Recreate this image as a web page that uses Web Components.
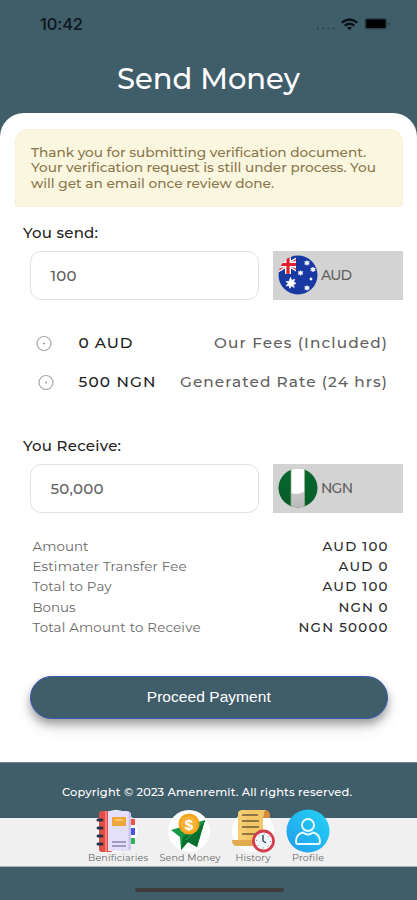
<!DOCTYPE html>
<html lang="en"><head><meta charset="utf-8"><title>Send Money</title>
<style>html,body{margin:0;background:#405d6a}body{font-family:Montserrat,Inter,"Open Sans",sans-serif}</style></head>
<body><send-money-app></send-money-app>
<script>
const define=(name,html,ready)=>{
  const t=document.createElement('template');t.innerHTML=html;
  customElements.define(name,class extends HTMLElement{
    constructor(){super();this.attachShadow({mode:'open'}).append(t.content.cloneNode(true));}
    connectedCallback(){if(ready)ready.call(this);}
  });
};

/* A single line of text tracked out to the width given in "w". */
define('tracked-text',`<style>:host{display:block;white-space:nowrap;flex:none}span{display:inline-block}</style><span><slot></slot></span>`,function(){
  const w=+this.getAttribute('w'),n=this.textContent.length;
  this.style.width=w+'px';
  const s=this.shadowRoot.querySelector('span');
  s.style.letterSpacing=(w-s.getBoundingClientRect().width)/(n-1)+'px';
});

define('status-bar',`<style>:host{display:flex;height:48px;align-items:center;padding:0 26px 0 40px;box-sizing:border-box;color:#0b171d;font-family:Inter,sans-serif;font-size:16.500px;font-weight:500}
svg{margin-left:auto}</style><tracked-text w="43">10:42</tracked-text>
<svg width="76" height="20" viewBox="0 0 76 20"><g fill="#253f4b"><circle cx="3" cy="14.5" r=".9"/><circle cx="8.500" cy="14.500" r=".9"/><circle cx="13.500" cy="14.500" r=".9"/><circle cx="18.500" cy="14.500" r=".9"/></g>
<g fill="none" stroke="#081116" stroke-width="2.300"><path d="M26.700 8.700Q34.500 2.200 42.300 8.700"/><path d="M29.700 11.700Q34.500 7.800 39.300 11.700"/></g><path d="M32 13.600q2.500-1.900 5 0L34.500 16.200z" fill="#081116"/>
<rect x="49.500" y="4" width="22.500" height="11.500" rx="2.500" fill="#2b424d"/><rect x="51" y="5.500" width="19.500" height="8.500" rx="1" fill="#000"/><path d="M73.500 7.500q2.500 2 0 4.500z" fill="#20343d"/></svg>`);

define('page-title',`<style>:host{display:flex;height:60px;justify-content:center;align-items:center;color:#fff;font-size:29px;font-weight:500;margin-bottom:5px}</style><slot></slot>`);

define('notice-box',`<style>:host{display:block;box-sizing:border-box;height:78px;margin:0 14px 0 15px;padding:15.500px 15px 0 16px;background:#fbf6e0;border-radius:14px 14px 4px 4px;box-shadow:inset 0 0 0 1px #f9f1d5;color:#8a764c;font-size:13.700px;font-weight:500;line-height:15.600px}</style><slot></slot>`);

define('field-label',`<style>:host{display:flex;box-sizing:border-box;height:37px;align-items:center;padding-left:23px;color:#222;font-size:15px;font-weight:500}</style><slot></slot>`);

define('amount-field',`<style>:host{display:flex;gap:14.500px;padding:0 14px 0 29.500px;height:48.500px;font-size:15px;font-weight:500;color:#606060}
.in{box-sizing:border-box;width:229px;border:1px solid #e0e0e0;border-radius:11px;display:flex;align-items:center;padding-left:20px;background:#fff}
.cur{flex:1;background:#d3d3d3;display:flex;align-items:center;padding-left:4.500px;gap:3.500px;font-size:14px}</style>
<div class="in"><slot name="value"></slot></div><div class="cur"><slot name="flag"></slot><slot></slot></div>`);

define('flag-icon',`<style>:host{display:block;width:40px;height:40px}svg{display:none}:host([country=au]) .au,:host([country=ng]) .ng{display:block}</style>
<svg class="au" width="40" height="40" viewBox="0 0 40 40"><defs><clipPath id="c"><circle cx="20" cy="20" r="19.500"/></clipPath><clipPath id="u"><path d="M0 0h18v19H0z"/></clipPath></defs>
<g clip-path="url(#c)"><path fill="#1838a2" d="M0 0h40v40H0z"/><g clip-path="url(#u)"><path d="M-6 0L26 19M-6 19L26 0" stroke="#fff" stroke-width="4"/><path d="M-6 0L26 19M-6 19L26 0" stroke="#e33b3e" stroke-width="1.400"/><path d="M10 0v19M0 9.500h18" stroke="#fff" stroke-width="6"/><path d="M10 0v19M0 9.500h18" stroke="#e21f2c" stroke-width="3.200"/></g>
<path fill="#fff" stroke="#fff" stroke-width=".8" d="M12.500 22.500l1.200 3 3-1.200-1.200 2.800 2.600 1.400-2.800.9.900 3-2.700-1.600-1.700 2.500-.7-2.900-3 .5 2-2.300-2-2.100 2.900.2z"/>
<g fill="#fff" stroke="#fff" stroke-width=".5"><path id="s" d="M29 5.500l.8 1.300 1.600-.2-.8 1.400.8 1.300-1.600-.1-.8 1.300-.8-1.300-1.600.1.800-1.300-.8-1.400 1.600.2z"/><use href="#s" x="6" y="6.500"/><use href="#s" x="-6.500" y="10"/><use href="#s" y="25"/><circle cx="33" cy="24" r="1.200"/></g></g></svg>
<svg class="ng" width="40" height="40" viewBox="0 0 40 40"><defs><clipPath id="n"><circle cx="20" cy="20" r="19.500"/></clipPath><clipPath id="m"><path d="M13 0h13.500v40H13z"/></clipPath><linearGradient id="g" x2="0" y2="1"><stop stop-color="#08672f"/><stop offset="1" stop-color="#075c29"/></linearGradient><linearGradient id="w" x2="0" y2="1"><stop stop-color="#ddd"/><stop offset="1" stop-color="#bababa"/></linearGradient></defs><g clip-path="url(#n)"><path fill="url(#g)" d="M0 0h40v40H0z"/><path fill="url(#w)" d="M13 0h13.500v40H13z"/><g clip-path="url(#m)"><circle cx="18" cy="12" r="14" fill="#fff"/></g><path d="M13 0v40M26.500 0v40" stroke="#8aae7d" stroke-width=".8"/></g></svg>`);

define('rate-row',`<style>:host{display:flex;align-items:center;height:39px;padding:0 30px 0 36px;font-size:15.300px;font-weight:500;color:#606060}
svg{margin-left:var(--shift,0);margin-right:calc(26.500px - var(--shift,0px))}.v{color:#222;flex:1}.v,.k{margin-top:-1px}</style>
<svg width="16" height="16" viewBox="0 0 16 16"><circle cx="8" cy="8.500" r="7" fill="none" stroke="#a9a9a9" stroke-width="1.200"/><path d="M7 8.500h2" stroke="#999" stroke-width="1.300"/></svg><div class="v"><slot name="value"></slot></div><div class="k"><slot></slot></div>`);

define('summary-row',`<style>:host{display:flex;justify-content:space-between;align-items:center;height:20.400px;padding:0 29.500px 0 32.500px;font-size:13.400px;color:#686868}
.v{color:#2a2a2a;font-weight:500}</style><slot></slot><div class="v"><slot name="value"></slot></div>`);

define('primary-button',`<style>:host{display:block;margin:38.500px 29px 0 29.500px}button{display:flex;align-items:center;justify-content:center;width:100%;height:43px;border:1px solid #3657b5;border-radius:22px;background:#405d6a;color:#fff;font:15.500px "Liberation Sans",Arial,sans-serif;padding:0;box-shadow:0 5px 9px rgba(0,0,0,.32),0 9px 16px rgba(0,0,0,.1)}</style><button><slot></slot></button>`);

define('nav-item',`<style>:host{display:flex;flex-direction:column;align-items:center;font-size:9.600px;line-height:10px;color:#686868}::slotted(svg){display:block;width:44px;height:44px}</style><slot name="icon"></slot><slot></slot>`);

define('app-footer',`<style>:host{display:block;height:138px;box-sizing:border-box;border-top:1px solid #74868f;background:#405d6a}
.copy{height:55px;box-sizing:border-box;padding:2px 0 0 62px;display:flex;align-items:center;color:#fff;font-size:11.400px;font-weight:500}
.bar{height:49px;background:#f0f0f0;display:flex;align-items:flex-end;padding-left:88px;gap:11.500px;box-sizing:border-box;padding-bottom:3px;border-bottom:1px solid #abb6bb}
.bar nav-item:nth-child(3){width:44px;margin-left:-1px}.bar nav-item:nth-child(4){margin-left:-.500px}
.home{width:149px;height:4px;border-radius:2px;background:#3d3b3b;margin:21px 0 0 135px}</style>
<div class="copy"><tracked-text w="290">Copyright © 2023 Amenremit. All rights reserved.</tracked-text></div>
<div class="bar">
<nav-item><svg slot="icon" viewBox="0 0 44 44"><circle cx="20" cy="22" r="21" fill="#fff"/><path fill="#ef5148" d="M33 10h5q1 0 1 1v5h-6z"/><path fill="#4b55dc" d="M33 19h6v7h-6z"/><path fill="#2fb35a" d="M33 29h6v5q0 1-1 1h-5z"/><rect x="3" y="2" width="14" height="41" rx="3" fill="#df4e49"/><path d="M10 2v41" stroke="#ff7d70" stroke-width="2"/><path d="M12 2h18q5 0 5 4v33q0 3-4 3H12z" fill="#e4dffb"/><path d="M32.500 2.500q2.500 1 2.500 3.500v33q0 2-2.500 3z" fill="#cbc3ee"/><rect x="16" y="8" width="14" height="9" fill="#eea63b"/><path d="M19 11h8" stroke="#ffd16f" stroke-width="1.500"/><path d="M16 33h14M16 37h14" stroke="#8c88ad" stroke-width="1.300"/><path d="M2 11h4M2 19h4M2 27h4M2 35h4" stroke="#2b3046" stroke-width="3" stroke-linecap="round"/></svg><tracked-text w="60">Benificiaries</tracked-text></nav-item>
<nav-item><svg slot="icon" viewBox="0 0 44 44"><circle cx="21" cy="22" r="21" fill="#fff"/><path fill="#159947" d="M37 11L3 21l9 7 1 13 7-8 9 5z"/><path fill="#07702e" d="M37 11L15 28l-2 13 7-8 9 5z"/><path d="M35 13L18 31" stroke="#28b158"/><circle cx="21" cy="15" r="10.500" fill="#f6a51d"/><circle cx="21" cy="15" r="8" fill="#f8b334"/><text x="21" y="20.500" text-anchor="middle" font-family="Liberation Sans" font-weight="700" font-size="15" fill="#fff">$</text></svg><tracked-text w="61">Send Money</tracked-text></nav-item>
<nav-item><svg slot="icon" viewBox="0 0 44 44"><circle cx="22" cy="22" r="21" fill="#fff"/><path fill="#d58b39" d="M33 1q6 0 6 5v3h-7z"/><path fill="#f3c768" d="M12 1h23q-3 2-3 6v29H7V5q0-4 5-4z"/><path fill="#e3ab50" d="M1 31h25v6H6q-5 0-5-6z"/><path fill="#f8d77f" d="M12 1h3v30H7V5q0-4 5-4z" opacity=".45"/><path d="M11 6h16M11 12h17M11 18h17M11 25h13" stroke="#705a38" stroke-width="1.400"/><circle cx="32.500" cy="32" r="10" fill="#fff" stroke="#d43d4d" stroke-width="2.800"/><circle cx="32.500" cy="32" r="7" fill="#eef5fb" stroke="#596376" stroke-dasharray="1 4.500"/><path d="M32 26v6l3 2" fill="none" stroke="#26384c" stroke-width="1.300"/></svg><tracked-text w="35">History</tracked-text></nav-item>
<nav-item><svg slot="icon" viewBox="0 0 44 44"><defs><linearGradient id="p" x1="1" x2="0" y2="1"><stop stop-color="#22d4f4"/><stop offset="1" stop-color="#249bed"/></linearGradient></defs><circle cx="22" cy="22" r="21.500" fill="url(#p)"/><g fill="none" stroke="#e8fbff" stroke-width="1.900" stroke-linejoin="round"><circle cx="22" cy="16" r="6"/><path d="M17 23.500q-7 1.500-7 9.500 0 2 2 2h20q2 0 2-2 0-8-7-9.500-5 4-10 0z"/></g></svg><tracked-text w="32">Profile</tracked-text></nav-item>
</div><div class="home"></div>`);

define('send-money-app',`<style>:host{display:block;width:417px;height:900px;overflow:hidden;background:#405d6a}
main{box-sizing:border-box;height:649px;padding-top:16px;background:#fff;border-radius:24px 24px 0 0}
.first{margin-top:7px}.rates{margin:23.500px 0 26px}.summary{margin-top:23px}</style>
<status-bar></status-bar><page-title><tracked-text w="183">Send Money</tracked-text></page-title>
<main><notice-box><tracked-text w="335">Thank you for submitting verification document.</tracked-text><tracked-text w="345">Your verification request is still under process. You</tracked-text><tracked-text w="243">will get an email once review done.</tracked-text></notice-box>
<field-label class="first"><tracked-text w="75">You send:</tracked-text></field-label>
<amount-field><tracked-text slot="value" w="26">100</tracked-text><flag-icon slot="flag" country="au"></flag-icon><tracked-text w="31">AUD</tracked-text></amount-field>
<div class="rates"><rate-row><tracked-text slot="value" w="54">0 AUD</tracked-text><tracked-text w="173">Our Fees (Included)</tracked-text></rate-row>
<rate-row style="--shift:2px"><tracked-text slot="value" w="77">500 NGN</tracked-text><tracked-text w="207">Generated Rate (24 hrs)</tracked-text></rate-row></div>
<field-label><tracked-text w="98">You Receive:</tracked-text></field-label>
<amount-field><tracked-text slot="value" w="53">50,000</tracked-text><flag-icon slot="flag" country="ng"></flag-icon><tracked-text w="32">NGN</tracked-text></amount-field>
<div class="summary">
<summary-row><tracked-text w="56">Amount</tracked-text><tracked-text slot="value" w="65">AUD 100</tracked-text></summary-row>
<summary-row><tracked-text w="154">Estimater Transfer Fee</tracked-text><tracked-text slot="value" w="49">AUD 0</tracked-text></summary-row>
<summary-row><tracked-text w="79">Total to Pay</tracked-text><tracked-text slot="value" w="65">AUD 100</tracked-text></summary-row>
<summary-row><tracked-text w="43">Bonus</tracked-text><tracked-text slot="value" w="49">NGN 0</tracked-text></summary-row>
<summary-row><tracked-text w="168">Total Amount to Receive</tracked-text><tracked-text slot="value" w="89">NGN 50000</tracked-text></summary-row></div>
<primary-button><tracked-text w="124">Proceed Payment</tracked-text></primary-button></main>
<app-footer></app-footer>`);
</script></body></html>
